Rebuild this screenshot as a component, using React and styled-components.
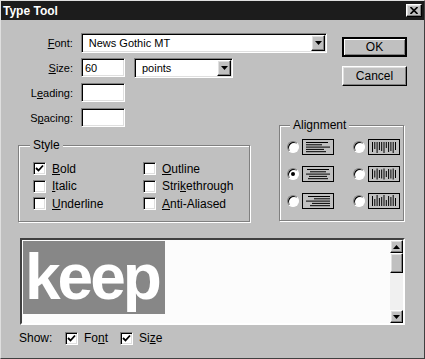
import styled, { createGlobalStyle, css } from "styled-components";

const GlobalStyle = createGlobalStyle`
  html, body {
    margin: 0;
    padding: 0;
    background: #c0c0c0;
  }
`;

const raised = css`
  border: 1px solid;
  border-color: #fff #000 #000 #fff;
  box-shadow: inset -1px -1px #808080, inset 1px 1px #dfdfdf;
`;

const sunken = css`
  border: 1px solid;
  border-color: #808080 #fff #fff #808080;
  box-shadow: inset 1px 1px #000, inset -1px -1px #dfdfdf;
`;

const Window = styled.div`
  width: 425px;
  height: 359px;
  box-sizing: border-box;
  background: #c0c0c0;
  border: 1px solid;
  border-color: #dfdfdf #404040 #404040 #dfdfdf;
  display: flex;
  flex-direction: column;
  font-family: "Liberation Sans", Arial, sans-serif;
  font-size: 11px;
  color: #000;
`;

const TitleBar = styled.div`
  height: 19px;
  background: #1c1c1c;
  color: #fff;
  font-weight: bold;
  font-size: 12px;
  display: flex;
  align-items: center;
  justify-content: space-between;
  padding: 0 2px 0 2px;
`;

const CloseButton = styled.div`
  width: 16px;
  height: 13px;
  box-sizing: border-box;
  ${raised};
  background: #c0c0c0;
  display: flex;
  align-items: center;
  justify-content: center;
`;

const Content = styled.div`
  padding: 13px 0 0 17px;
  display: flex;
  flex-direction: column;
`;

const Upper = styled.div`
  display: grid;
  grid-template-columns: 261px 48px 15px 65px;
  grid-template-rows: 25px 25px 25px 25px auto;
`;

const FieldRow = styled.div`
  grid-column: 1 / 3;
  grid-row: ${(p) => p.$row};
  display: flex;
  align-items: flex-start;
`;

const Label = styled.div`
  width: 55px;
  text-align: right;
  margin-right: 8px;
  line-height: 20px;
`;

const TextBox = styled.div`
  width: 44px;
  height: 19px;
  box-sizing: border-box;
  ${sunken};
  background: #fff;
  padding: 2px 3px;
  line-height: 14px;
`;

const Combo = styled.div`
  width: ${(p) => p.$w}px;
  height: 20px;
  box-sizing: border-box;
  ${sunken};
  background: #fff;
  display: flex;
  align-items: center;
  justify-content: space-between;
  padding: 0 1px 0 7px;
  margin-left: ${(p) => p.$ml || 0}px;
`;

const DropButton = styled.div`
  width: 14px;
  height: 16px;
  box-sizing: border-box;
  ${raised};
  background: #c0c0c0;
  display: flex;
  align-items: center;
  justify-content: center;
`;

const Buttons = styled.div`
  grid-column: 4;
  grid-row: 1 / 4;
  display: flex;
  flex-direction: column;
  gap: 9px;
  padding-top: 4px;
`;

const PushButton = styled.div`
  width: 65px;
  height: 20px;
  box-sizing: border-box;
  background: #c0c0c0;
  display: flex;
  align-items: center;
  justify-content: center;
  font-size: 12px;
  ${raised};
  ${(p) =>
    p.$default &&
    css`
      border: 2px solid #000;
      box-shadow: inset 1px 1px #fff, inset -1px -1px #808080;
    `}
`;

const Group = styled.div`
  position: relative;
  box-sizing: border-box;
  border: 1px solid #808080;
  box-shadow: inset 1px 1px #fff, 1px 1px #fff;
  display: grid;
  align-content: start;
  justify-content: start;
`;

const StyleGroup = styled(Group)`
  grid-column: 1;
  grid-row: 5;
  margin-top: 12px;
  width: 232px;
  height: 77px;
  grid-template-columns: 110px auto;
  grid-auto-rows: 17.5px;
  padding: 14px 0 0 14px;
`;

const AlignGroup = styled(Group)`
  grid-column: 2 / 5;
  grid-row: 4 / 6;
  margin: 17px 3px 0 0;
  height: 96px;
  grid-template-columns: auto auto;
  column-gap: 19px;
  row-gap: 11px;
  padding: 13px 0 0 7px;
`;

const Caption = styled.div`
  position: absolute;
  top: -7px;
  left: ${(p) => p.$left}px;
  padding: 0 3px;
  background: #c0c0c0;
  font-size: 12px;
  line-height: 13px;
`;

const CheckRow = styled.div`
  display: flex;
  align-items: center;
  gap: 6px;
  font-size: 12px;
`;

const Box = styled.div`
  width: 13px;
  height: 13px;
  box-sizing: border-box;
  ${sunken};
  background: #fff;
  display: flex;
  align-items: center;
  justify-content: center;
`;

const RadioRow = styled.div`
  display: flex;
  align-items: center;
  gap: 3px;
`;

const Radio = styled.div`
  width: 12px;
  height: 12px;
  box-sizing: border-box;
  border-radius: 50%;
  border: 1px solid;
  border-color: #808080 #fff #fff #808080;
  box-shadow: inset 1px 1px #000;
  background: #fff;
  display: flex;
  align-items: center;
  justify-content: center;
`;

const Dot = styled.div`
  width: 4px;
  height: 4px;
  border-radius: 50%;
  background: #000;
`;

const Preview = styled.div`
  margin: 16px 0 0 2px;
  width: 385px;
  height: 87px;
  box-sizing: border-box;
  border: 2px solid;
  border-color: #404040 #fff #fff #404040;
  background: #fcfcfc;
  display: flex;
`;

const PreviewText = styled.div`
  flex: 1;
  padding: 1px 0 0 1px;
`;

const Highlight = styled.span`
  display: inline-block;
  background: #878787;
  color: #fff;
  font-family: "Liberation Sans", Arial, sans-serif;
  font-weight: bold;
  font-size: 64px;
  letter-spacing: -3px;
  line-height: 73px;
  padding: 0 6px 0 2px;
`;

const ScrollBar = styled.div`
  width: 13px;
  background: #f0f0f0;
  display: flex;
  flex-direction: column;
  justify-content: space-between;
`;

const ScrollButton = styled.div`
  height: ${(p) => p.$h || 13}px;
  box-sizing: border-box;
  ${raised};
  background: #c0c0c0;
  display: flex;
  align-items: center;
  justify-content: center;
`;

const ScrollTop = styled.div`
  display: flex;
  flex-direction: column;
`;

const ShowRow = styled.div`
  margin-top: 6px;
  display: flex;
  align-items: center;
  font-size: 12px;
  padding-left: 1px;
`;

const ShowLabel = styled.span`
  width: 46px;
`;

const ShowItem = styled(CheckRow)`
  margin-right: 12px;
`;

const Arrow = ({ up }) => (
  <svg width="7" height="4" viewBox="0 0 7 4">
    <path d={up ? "M3.5 0 L7 4 L0 4 Z" : "M0 0 L7 0 L3.5 4 Z"} fill="#000" />
  </svg>
);

const Check = () => (
  <svg width="9" height="9" viewBox="0 0 9 9">
    <path d="M1 4 L3.5 6.5 L8 1.5" stroke="#000" strokeWidth="1.8" fill="none" />
  </svg>
);

const CheckBox = ({ checked }) => <Box>{checked && <Check />}</Box>;

function AlignIcon({ kind }) {
  const widths = [22, 16, 24, 18, 20];
  const heights = [10, 7, 11, 8, 9, 11, 6, 10, 9, 11, 8];
  return (
    <svg width="32" height="16" viewBox="0 0 32 16">
      <rect x="0.5" y="0.5" width="31" height="15" fill="none" stroke="#000" />
      {kind.startsWith("h") &&
        widths.map((w, i) => {
          let x = 4;
          if (kind === "hc") x = 16 - w / 2;
          if (kind === "hr") x = 28 - w;
          return (
            <line key={i} x1={x} x2={x + w} y1={3.5 + i * 2.3} y2={3.5 + i * 2.3} stroke="#000" />
          );
        })}
      {kind.startsWith("v") &&
        heights.map((h, i) => {
          const x = 4.5 + i * 2.3;
          let y = 3;
          if (kind === "vc") y = 8 - h / 2;
          if (kind === "vb") y = 13 - h;
          return <line key={i} x1={x} x2={x} y1={y} y2={y + h} stroke="#000" />;
        })}
    </svg>
  );
}

function App() {
  return (
    <>
      <GlobalStyle />
      <Window>
        <TitleBar>
          <span>Type Tool</span>
          <CloseButton>
            <svg width="8" height="7" viewBox="0 0 8 7">
              <path d="M0.5 0 L7.5 7 M7.5 0 L0.5 7" stroke="#000" strokeWidth="1.6" />
            </svg>
          </CloseButton>
        </TitleBar>
        <Content>
          <Upper>
            <FieldRow $row={1}>
              <Label>
                <u>F</u>ont:
              </Label>
              <Combo $w={247}>
                <span>News Gothic MT</span>
                <DropButton>
                  <Arrow />
                </DropButton>
              </Combo>
            </FieldRow>
            <FieldRow $row={2}>
              <Label>
                <u>S</u>ize:
              </Label>
              <TextBox>60</TextBox>
              <Combo $w={99} $ml={9}>
                <span>points</span>
                <DropButton>
                  <Arrow />
                </DropButton>
              </Combo>
            </FieldRow>
            <FieldRow $row={3}>
              <Label>
                L<u>e</u>ading:
              </Label>
              <TextBox />
            </FieldRow>
            <FieldRow $row={4}>
              <Label>
                S<u>p</u>acing:
              </Label>
              <TextBox />
            </FieldRow>
            <Buttons>
              <PushButton $default>OK</PushButton>
              <PushButton>Cancel</PushButton>
            </Buttons>
            <AlignGroup>
              <Caption $left={10}>Alignment</Caption>
              <RadioRow>
                <Radio />
                <AlignIcon kind="hl" />
              </RadioRow>
              <RadioRow>
                <Radio />
                <AlignIcon kind="vt" />
              </RadioRow>
              <RadioRow>
                <Radio>
                  <Dot />
                </Radio>
                <AlignIcon kind="hc" />
              </RadioRow>
              <RadioRow>
                <Radio />
                <AlignIcon kind="vc" />
              </RadioRow>
              <RadioRow>
                <Radio />
                <AlignIcon kind="hr" />
              </RadioRow>
              <RadioRow>
                <Radio />
                <AlignIcon kind="vb" />
              </RadioRow>
            </AlignGroup>
            <StyleGroup>
              <Caption $left={11}>Style</Caption>
              <CheckRow>
                <CheckBox checked />
                <span>
                  <u>B</u>old
                </span>
              </CheckRow>
              <CheckRow>
                <CheckBox />
                <span>
                  <u>O</u>utline
                </span>
              </CheckRow>
              <CheckRow>
                <CheckBox />
                <span>
                  <u>I</u>talic
                </span>
              </CheckRow>
              <CheckRow>
                <CheckBox />
                <span>
                  Stri<u>k</u>ethrough
                </span>
              </CheckRow>
              <CheckRow>
                <CheckBox />
                <span>
                  <u>U</u>nderline
                </span>
              </CheckRow>
              <CheckRow>
                <CheckBox />
                <span>
                  <u>A</u>nti-Aliased
                </span>
              </CheckRow>
            </StyleGroup>
          </Upper>
          <Preview>
            <PreviewText>
              <Highlight>keep</Highlight>
            </PreviewText>
            <ScrollBar>
              <ScrollTop>
                <ScrollButton>
                  <Arrow up />
                </ScrollButton>
                <ScrollButton $h={20} />
              </ScrollTop>
              <ScrollButton>
                <Arrow />
              </ScrollButton>
            </ScrollBar>
          </Preview>
          <ShowRow>
            <ShowLabel>Show:</ShowLabel>
            <ShowItem>
              <CheckBox checked />
              <span>
                Fo<u>n</u>t
              </span>
            </ShowItem>
            <ShowItem>
              <CheckBox checked />
              <span>
                Si<u>z</u>e
              </span>
            </ShowItem>
          </ShowRow>
        </Content>
      </Window>
    </>
  );
}

export default App;
